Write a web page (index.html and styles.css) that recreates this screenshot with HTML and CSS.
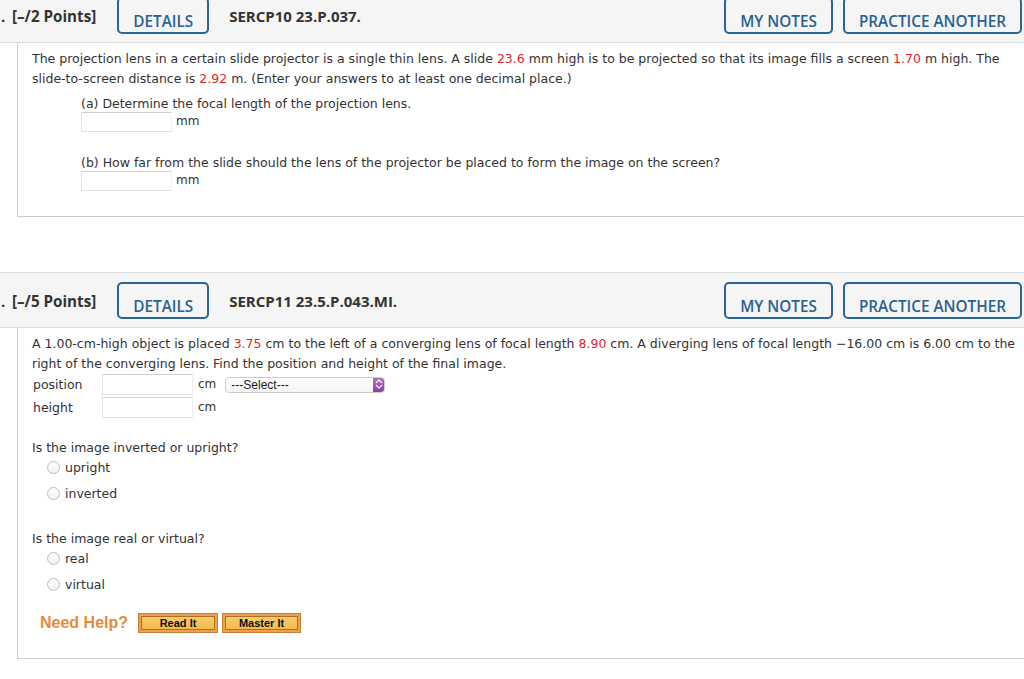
FILE: index.html
```html
<!DOCTYPE html>
<html lang="en">
<head>
<meta charset="utf-8">
<title>Questions</title>
<link rel="stylesheet" href="styles.css">
</head>
<body>
<div class="page">
  <section class="question">
    <div class="qhead">
      <span class="qnum">.</span>
      <span class="points">[–/2 Points]</span>
      <button class="hbtn">DETAILS</button>
      <span class="qid">SERCP10 23.P.037.</span>
      <span class="spacer"></span>
      <button class="hbtn">MY NOTES</button>
      <button class="hbtn hbtn-gap">PRACTICE ANOTHER</button>
    </div>
    <div class="qbody q1">
      <p class="stem">The projection lens in a certain slide projector is a single thin lens. A slide <span class="val">23.6</span> mm high is to be projected so that its image fills a screen <span class="val">1.70</span> m high. The<br>slide-to-screen distance is <span class="val">2.92</span> m. (Enter your answers to at least one decimal place.)</p>
      <div class="part part-a">
        <div class="part-label">(a) Determine the focal length of the projection lens.</div>
        <div class="ans"><input class="field" type="text"><span class="unit">mm</span></div>
      </div>
      <div class="part part-b">
        <div class="part-label">(b) How far from the slide should the lens of the projector be placed to form the image on the screen?</div>
        <div class="ans"><input class="field" type="text"><span class="unit">mm</span></div>
      </div>
    </div>
  </section>

  <section class="question q2wrap">
    <div class="qhead">
      <span class="qnum">.</span>
      <span class="points">[–/5 Points]</span>
      <button class="hbtn">DETAILS</button>
      <span class="qid">SERCP11 23.5.P.043.MI.</span>
      <span class="spacer"></span>
      <button class="hbtn">MY NOTES</button>
      <button class="hbtn hbtn-gap">PRACTICE ANOTHER</button>
    </div>
    <div class="qbody q2">
      <p class="stem">A 1.00-cm-high object is placed <span class="val">3.75</span> cm to the left of a converging lens of focal length <span class="val">8.90</span> cm. A diverging lens of focal length −16.00 cm is 6.00 cm to the<br>right of the converging lens. Find the position and height of the final image.</p>
      <div class="grid">
        <span class="glabel">position</span>
        <input class="field field-g" type="text">
        <span class="unit unit-g">cm</span>
        <div class="select"><span class="select-text">---Select---</span><span class="select-arrow"><svg width="12" height="16" viewBox="0 0 12 16"><path d="M3.3 6.6 L6 4 L8.7 6.6 M3.3 9.4 L6 12 L8.7 9.4" fill="none" stroke="#fff" stroke-width="1.3" stroke-linecap="round" stroke-linejoin="round"/></svg></span></div>
        <span class="glabel">height</span>
        <input class="field field-g" type="text">
        <span class="unit unit-g">cm</span>
        <span></span>
      </div>

      <p class="ask ask-1">Is the image inverted or upright?</p>
      <ul class="radios">
        <li><input type="radio" name="orient" class="radio"><span>upright</span></li>
        <li><input type="radio" name="orient" class="radio"><span>inverted</span></li>
      </ul>

      <p class="ask ask-2">Is the image real or virtual?</p>
      <ul class="radios">
        <li><input type="radio" name="kind" class="radio"><span>real</span></li>
        <li><input type="radio" name="kind" class="radio"><span>virtual</span></li>
      </ul>

      <div class="help">
        <span class="help-text">Need Help?</span>
        <button class="help-btn"><span>Read It</span></button>
        <button class="help-btn help-btn-2"><span>Master It</span></button>
      </div>
    </div>
  </section>
</div>
</body>
</html>
```

FILE: styles.css
```css
* { box-sizing: border-box; }

html, body {
  margin: 0;
  padding: 0;
  background: #ffffff;
  overflow: hidden;
}

body {
  font-family: "DejaVu Sans", Verdana, sans-serif;
  font-size: 12.5px;
  color: #333333;
}

p { margin: 0; }
ul { margin: 0; padding: 0; list-style: none; }

.page {
  margin-top: -13px;
}

.q2wrap {
  margin-top: 55px;
}

/* ---------- header bar ---------- */
.qhead {
  display: flex;
  align-items: center;
  height: 56px;
  padding: 9px 2px 8px 0;
  background: #f5f5f5;
  border-top: 1px solid #dddddd;
  border-bottom: 1px solid #dddddd;
  font-family: "Open Sans", "DejaVu Sans", sans-serif;
  color: #333333;
}

.qnum {
  font-size: 15px;
  font-weight: 700;
  margin-left: 1px;
  width: 11px;
}

.points {
  font-size: 15.2px;
  font-weight: 700;
  margin-right: 21px;
  white-space: nowrap;
}

.qid {
  font-size: 15px;
  font-weight: 700;
  margin-left: 20px;
  white-space: nowrap;
}

.spacer { flex: 1; }

.hbtn {
  height: 37px;
  padding: 12px 14px 1px;
  border: 2px solid #2b6598;
  border-radius: 5px;
  background: transparent;
  font-family: "Open Sans", "DejaVu Sans", sans-serif;
  font-size: 15.3px;
  font-weight: 600;
  line-height: 20px;
  color: #2a6192;
  white-space: nowrap;
}

.hbtn-gap { margin-left: 10px; }

/* ---------- question body ---------- */
.qbody {
  margin-left: 17px;
  border-left: 1px solid #cccccc;
  border-bottom: 1px solid #cccccc;
  padding: 6px 2px 25px 14px;
  line-height: 19.5px;
}

.stem { white-space: nowrap; }

.val { color: #e3262b; }

.part { padding-left: 49px; }
.part-a { margin-top: 8px; }
.part-b { margin-top: 23px; }

.part-label { line-height: 16px; }

.ans {
  display: flex;
  align-items: center;
  height: 20px;
}

.field {
  width: 91px;
  height: 20px;
  margin: 0;
  padding: 0 3px;
  border: 1px solid #e2e2e2;
  border-top-color: #cfcfcf;
  border-right-color: #f0f0f0;
  background: #ffffff;
  font: 13px "DejaVu Sans", sans-serif;
}

.unit {
  margin-left: 4px;
  font-size: 12px;
  color: #333333;
}

/* ---------- q2 ---------- */
.q2 { padding-bottom: 25px; }

.grid {
  display: grid;
  grid-template-columns: 70px 91px auto auto;
  grid-auto-rows: 23px;
  align-items: center;
  justify-content: start;
}

.glabel { padding-left: 1px; }

.field-g { height: 21px; }

.unit-g { margin-left: 5px; }

.select {
  display: flex;
  align-items: center;
  width: 160px;
  height: 16px;
  margin-left: 9px;
  border: 1px solid #cdcdcd;
  border-radius: 4px;
  background: linear-gradient(#ffffff, #f4f4f4);
  overflow: hidden;
}

.select-text {
  flex: 1;
  padding-left: 5px;
  font-family: "Liberation Sans", Arial, sans-serif;
  font-size: 12px;
  line-height: 14px;
  color: #222222;
}

.select-arrow {
  display: flex;
  width: 12px;
  height: 16px;
  margin-top: -1px;
  margin-right: -1px;
  border-radius: 0 4px 4px 0;
  background: linear-gradient(#b978c8, #8e3fa2);
}

.ask-1 { margin-top: 19px; }
.ask-2 { margin-top: 26px; }

.radios { padding-left: 15px; }

.radios li {
  display: flex;
  align-items: center;
  height: 19.5px;
}

.radios li + li { margin-top: 6.5px; }

.radio {
  appearance: none;
  -webkit-appearance: none;
  width: 13px;
  height: 13px;
  margin: 1px 5px 0 0;
  border: 1px solid #bdbdbd;
  border-radius: 50%;
  background: linear-gradient(#ffffff, #f1f1f1);
}

.help {
  display: flex;
  align-items: center;
  height: 20px;
  margin-top: 19px;
  padding-left: 8px;
}

.help-text {
  font-family: "Liberation Sans", Arial, sans-serif;
  font-size: 16px;
  font-weight: 700;
  color: #e8893b;
  margin-right: 10px;
}

.help-btn {
  width: 80px;
  height: 20px;
  padding: 2px;
  border: 1px solid #c98138;
  background: #eaa24f;
  cursor: pointer;
}

.help-btn span {
  display: block;
  height: 100%;
  border: 1px solid #b56e25;
  background: linear-gradient(#f8cc6c, #f3b94f);
  font-family: "Liberation Sans", Arial, sans-serif;
  font-size: 11px;
  font-weight: 700;
  line-height: 12px;
  color: #111111;
}

.help-btn-2 {
  width: 79px;
  margin-left: 4px;
}
```
